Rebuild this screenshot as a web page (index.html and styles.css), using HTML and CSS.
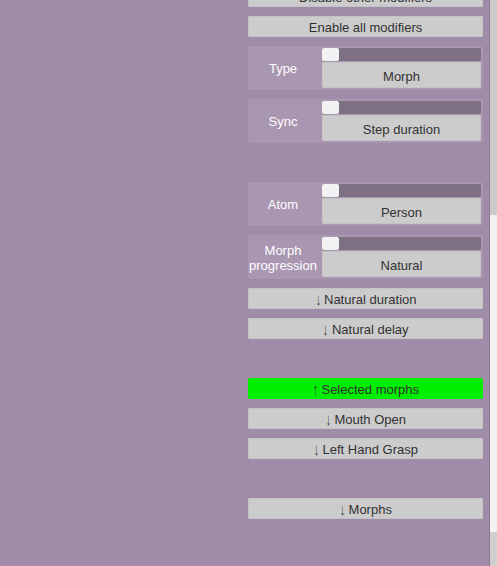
FILE: index.html
```html
<!DOCTYPE html>
<html>
<head>
<meta charset="utf-8">
<link rel="stylesheet" href="styles.css">
</head>
<body>
<div class="page">
  <div class="empty"></div>
  <div class="panel">
    <div class="btn top-clipped">Disable other modifiers</div>
    <div class="btn">Enable all modifiers</div>
    <div class="row">
      <div class="label">Type</div>
      <div class="control">
        <div class="track"><div class="knob"></div></div>
        <div class="btn inner">Morph</div>
      </div>
    </div>
    <div class="row">
      <div class="label">Sync</div>
      <div class="control">
        <div class="track"><div class="knob"></div></div>
        <div class="btn inner">Step duration</div>
      </div>
    </div>
    <div class="spacer"></div>
    <div class="row">
      <div class="label">Atom</div>
      <div class="control">
        <div class="track"><div class="knob"></div></div>
        <div class="btn inner">Person</div>
      </div>
    </div>
    <div class="row">
      <div class="label">Morph<br>progression</div>
      <div class="control">
        <div class="track"><div class="knob"></div></div>
        <div class="btn inner">Natural</div>
      </div>
    </div>
    <div class="btn"><span class="arrow">↓</span>Natural duration</div>
    <div class="btn"><span class="arrow">↓</span>Natural delay</div>
    <div class="spacer"></div>
    <div class="btn green"><span class="arrow">↑</span>Selected morphs</div>
    <div class="btn"><span class="arrow">↓</span>Mouth Open</div>
    <div class="btn"><span class="arrow">↓</span>Left Hand Grasp</div>
    <div class="spacer"></div>
    <div class="btn"><span class="arrow">↓</span>Morphs</div>
  </div>
  <div class="scrollbar">
    <div class="sb-handle"></div>
    <div class="sb-track"></div>
    <div class="sb-bottom"></div>
    <div class="sb-rest"></div>
  </div>
</div>
</body>
</html>
```

FILE: styles.css
```css
html, body {
  margin: 0;
  padding: 0;
  background: #a08ca8;
  font-family: "Liberation Sans", Arial, sans-serif;
  font-size: 13px;
  overflow: hidden;
}
.page {
  display: flex;
  height: 566px;
  width: 497px;
}
.empty {
  flex: 1;
}
.panel {
  width: 235px;
  margin-right: 6px;
  display: flex;
  flex-direction: column;
  gap: 9px;
}
.btn {
  height: 21px;
  box-sizing: border-box;
  padding-top: 1px;
  background: #cccccc;
  border-radius: 2px;
  color: #323232;
  display: flex;
  align-items: center;
  justify-content: center;
  white-space: nowrap;
  box-shadow: inset 0 0 0 1px #c4c4c4;
}
.arrow {
  display: inline-block;
  transform: scaleY(1.3) scaleX(0.8);
  margin-right: 3px;
}
.top-clipped {
  margin-top: -14px;
}
.green {
  background: #00ee00;
  box-shadow: none;
}
.spacer {
  height: 21px;
}
.row {
  height: 44px;
  background: #a996b0;
  border-radius: 3px;
  display: flex;
  box-sizing: border-box;
  padding: 2px 2px 2px 0;
}
.label {
  width: 70px;
  margin-right: 4px;
  color: #ffffff;
  display: flex;
  align-items: center;
  justify-content: center;
  text-align: center;
  line-height: 15px;
  padding-top: 1px;
}
.control {
  flex: 1;
  display: flex;
  flex-direction: column;
  gap: 1px;
}
.track {
  height: 13px;
  background: #7d7083;
  border-radius: 2px;
  display: flex;
}
.knob {
  width: 17px;
  height: 13px;
  background: #f2f2f2;
  border-radius: 2px;
}
.inner {
  height: 26px;
  padding-top: 2px;
}
.scrollbar {
  width: 7px;
  border-left: 1px solid #8a7a90;
  display: flex;
  flex-direction: column;
}
.sb-handle {
  height: 215px;
  background: #cbcbcb;
}
.sb-track {
  height: 317px;
  background: #f2f2f2;
}
.sb-bottom {
  height: 25px;
  background: #d0d0d0;
}
.sb-rest {
  flex: 1;
  background: #cfcfcf;
}
```
